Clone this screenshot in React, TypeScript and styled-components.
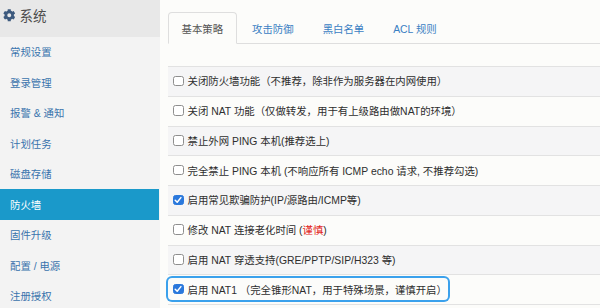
import React from "react";
import styled, { createGlobalStyle } from "styled-components";
import { FaCog } from "react-icons/fa";

const Global = createGlobalStyle`
  html, body { margin: 0; padding: 0; }
  body {
    width: 600px; height: 308px; overflow: hidden;
    background: #fcfcfa;
    font-family: "Liberation Sans", "Noto Sans CJK SC", sans-serif;
  }
`;

const Page = styled.div`
  display: flex;
  width: 600px;
  height: 308px;
  overflow: hidden;
`;

const Sidebar = styled.nav`
  width: 160px;
  flex: none;
  background: #f3f3f3;
  display: flex;
  flex-direction: column;
`;

const SideHeader = styled.div`
  height: 36.5px;
  flex: none;
  background: #e8e8e8;
  display: flex;
  align-items: center;
  gap: 4px;
  padding-left: 3px;
  padding-bottom: 6px;
  box-sizing: border-box;
  color: #4d4d4d;
  font-size: 13.5px;
  svg { color: #3d5a7e; width: 12.5px; height: 12.5px; }
`;

const SideItem = styled.div<{ $active?: boolean }>`
  height: 30.5px;
  flex: none;
  display: flex;
  align-items: center;
  padding-left: 10px;
  margin-right: ${(p) => (p.$active ? "1px" : "0")};
  font-size: 10.4px;
  color: ${(p) => (p.$active ? "#ffffff" : "#3a74ad")};
  background: ${(p) => (p.$active ? "#1a99ca" : "transparent")};
  white-space: pre;
`;

const Main = styled.main`
  flex: 1;
  min-width: 0;
  padding: 12px 0 0 8px;
  display: flex;
  flex-direction: column;
`;

const Tabs = styled.div`
  display: flex;
  border-bottom: 1px solid #dedede;
  height: 31px;
  flex: none;
`;

const Tab = styled.div<{ $active?: boolean }>`
  padding: 1px 12.5px 0;
  margin-right: 2px;
  margin-bottom: -1px;
  display: flex;
  align-items: center;
  font-size: 10.4px;
  border: 1px solid ${(p) => (p.$active ? "#dedede" : "transparent")};
  border-bottom-color: ${(p) => (p.$active ? "#fcfcfa" : "transparent")};
  border-radius: 4px 4px 0 0;
  background: ${(p) => (p.$active ? "#fcfcfa" : "transparent")};
  color: ${(p) => (p.$active ? "#555" : "#3a80c3")};
  box-sizing: border-box;
  height: 32px;
  white-space: pre;
`;

const Table = styled.div`
  margin-top: 22px;
  display: flex;
  flex-direction: column;
  border-bottom: 1px solid #e2e2e2;
`;

const Row = styled.div<{ $striped?: boolean }>`
  height: 29.75px;
  box-sizing: border-box;
  border-top: 1px solid #e2e2e2;
  background: ${(p) => (p.$striped ? "#f5f5f6" : "#fcfcfa")};
  display: flex;
  align-items: center;
`;

const Label = styled.label<{ $focused?: boolean }>`
  display: inline-flex;
  align-items: center;
  gap: 4px;
  height: 22px;
  padding: 0 1.5px 0 5px;
  margin-top: -1px;
  border-radius: 4px;
  font-size: 10.4px;
  color: #2e2e2e;
  white-space: pre;
  box-shadow: ${(p) => (p.$focused ? "0 0 0 2px #3ba1ec" : "none")};
`;

const Box = styled.span<{ $checked?: boolean }>`
  width: 10.5px;
  height: 10.5px;
  box-sizing: border-box;
  flex: none;
  border-radius: 2.5px;
  border: 1px solid ${(p) => (p.$checked ? "#2a78dc" : "#8e8e8e")};
  background: ${(p) => (p.$checked ? "#2a78dc" : "#ffffff")};
  display: inline-flex;
  align-items: center;
  justify-content: center;
  svg { display: block; }
`;

const Warn = styled.span`
  color: #e2231a;
`;

const Check: React.FC<{ checked?: boolean }> = ({ checked }) => (
  <Box $checked={checked}>
    {checked && (
      <svg width="8" height="8" viewBox="0 0 8 8">
        <path d="M1.2 4.2 L3.2 6.2 L6.9 1.6" fill="none" stroke="#fff" strokeWidth="1.5" strokeLinecap="round" strokeLinejoin="round" />
      </svg>
    )}
  </Box>
);

const items = ["常规设置", "登录管理", "报警 & 通知", "计划任务", "磁盘存储", "防火墙", "固件升级", "配置 / 电源", "注册授权"];
const tabs = ["基本策略", "攻击防御", "黑白名单", "ACL 规则"];

type Opt = { text: React.ReactNode; checked?: boolean; focused?: boolean };
const options: Opt[] = [
  { text: "关闭防火墙功能（不推荐，除非作为服务器在内网使用）" },
  { text: "关闭 NAT 功能（仅做转发，用于有上级路由做NAT的环境）" },
  { text: "禁止外网 PING 本机(推荐选上)" },
  { text: "完全禁止 PING 本机 (不响应所有 ICMP echo 请求, 不推荐勾选)" },
  { text: "启用常见欺骗防护(IP/源路由/ICMP等)", checked: true },
  { text: <>修改 NAT 连接老化时间 (<Warn>谨慎</Warn>)</> },
  { text: "启用 NAT 穿透支持(GRE/PPTP/SIP/H323 等)" },
  { text: "启用 NAT1 （完全锥形NAT，用于特殊场景，谨慎开启）", checked: true, focused: true },
];

export default function App() {
  return (
    <Page>
      <Global />
      <Sidebar>
        <SideHeader>
          <FaCog />
          <span>系统</span>
        </SideHeader>
        {items.map((it) => (
          <SideItem key={it} $active={it === "防火墙"}>{it}</SideItem>
        ))}
      </Sidebar>
      <Main>
        <Tabs>
          {tabs.map((t, i) => (
            <Tab key={t} $active={i === 0}>{t}</Tab>
          ))}
        </Tabs>
        <Table>
          {options.map((o, i) => (
            <Row key={i} $striped={i % 2 === 0}>
              <Label $focused={o.focused}>
                <Check checked={o.checked} />
                <span>{o.text}</span>
              </Label>
            </Row>
          ))}
        </Table>
      </Main>
    </Page>
  );
}
